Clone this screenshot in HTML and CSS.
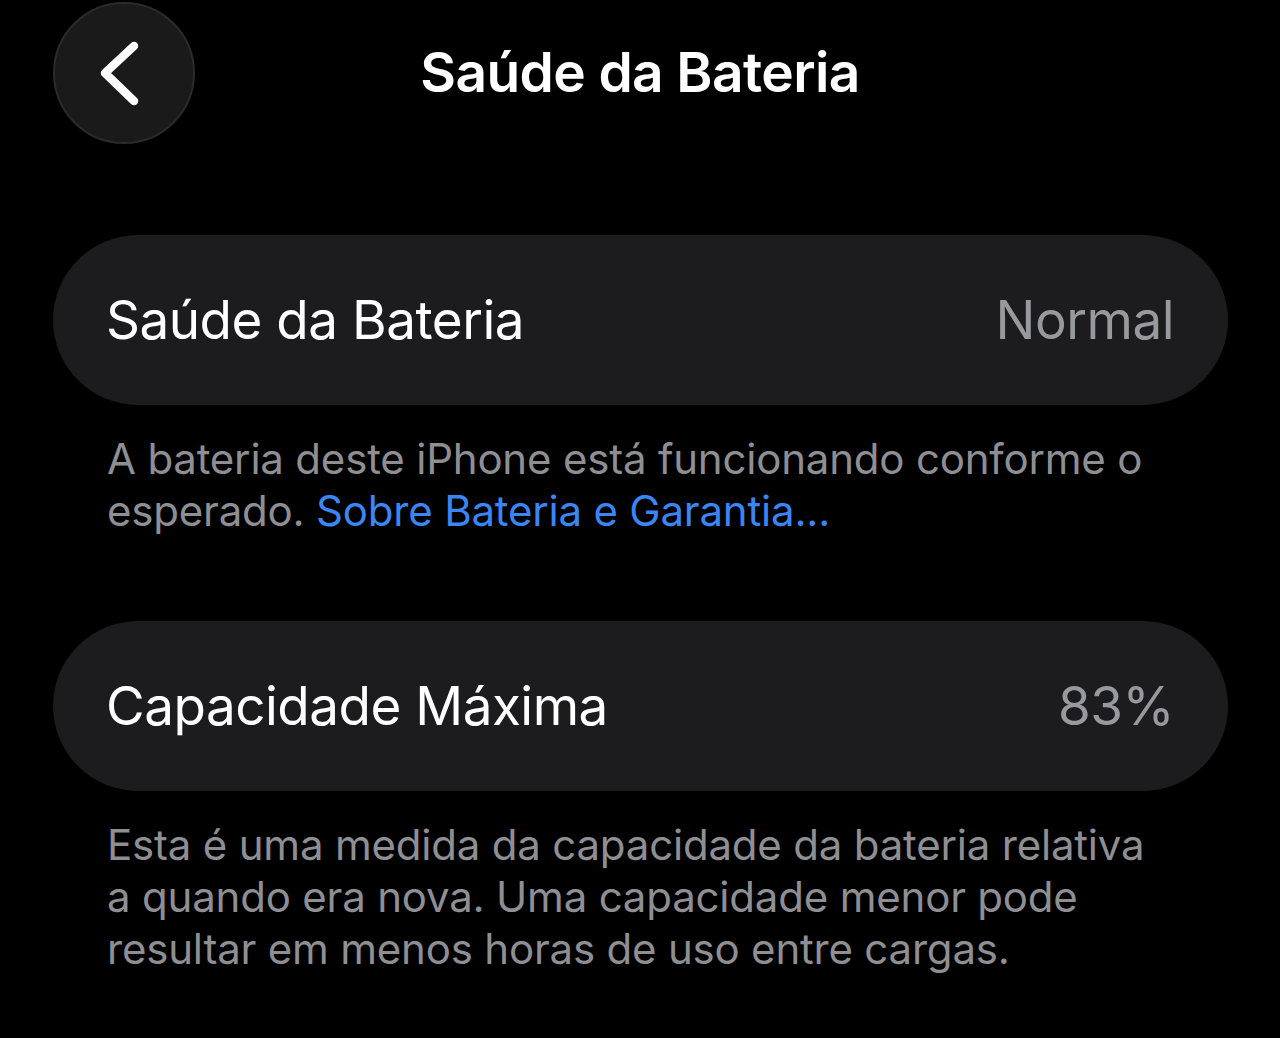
FILE: index.html
```html
<!DOCTYPE html>
<html lang="pt-BR">
<head>
<meta charset="utf-8">
<title>Saúde da Bateria</title>
<link rel="stylesheet" href="styles.css">
</head>
<body>
<div class="screen">
  <header class="nav">
    <div class="nav-left">
      <button class="back" aria-label="Voltar">
        <svg viewBox="0 0 142 142" width="142" height="142">
          <path d="M81 44 L52 71 L81 99" fill="none" stroke="#fff" stroke-width="8.5" stroke-linecap="round" stroke-linejoin="round"/>
        </svg>
      </button>
    </div>
    <h1 class="nav-title">Saúde da Bateria</h1>
    <div class="nav-right"></div>
  </header>

  <section class="group first">
    <div class="cell">
      <span class="cell-label">Saúde da Bateria</span>
      <span class="cell-value">Normal</span>
    </div>
    <p class="footnote">A bateria deste iPhone está funcionando conforme o esperado. <a class="link" href="#">Sobre Bateria e Garantia...</a></p>
  </section>

  <section class="group second">
    <div class="cell">
      <span class="cell-label">Capacidade Máxima</span>
      <span class="cell-value">83%</span>
    </div>
    <p class="footnote">Esta é uma medida da capacidade da bateria relativa a quando era nova. Uma capacidade menor pode resultar em menos horas de uso entre cargas.</p>
  </section>
</div>
</body>
</html>
```

FILE: styles.css
```css
* { box-sizing: border-box; }
html, body {
  margin: 0;
  padding: 0;
  background: #000;
}
body {
  font-family: Inter, "Noto Sans", "Liberation Sans", sans-serif;
  color: #fff;
  -webkit-font-smoothing: antialiased;
}
.screen {
  width: 1280px;
  height: 1038px;
  overflow: hidden;
}
.nav {
  display: grid;
  grid-template-columns: 1fr auto 1fr;
  align-items: center;
  height: 144px;
  padding-top: 1px;
}
.nav-left {
  padding-left: 53px;
  display: flex;
}
.back {
  width: 142px;
  height: 142px;
  border-radius: 50%;
  background: #1a1a1b;
  border: 2px solid #2b2b2d;
  padding: 0;
  display: flex;
  align-items: center;
  justify-content: center;
  cursor: pointer;
}
.back svg { display: block; margin: -2px; }
.nav-title {
  margin: 0;
  font-size: 55px;
  font-weight: 600;
  letter-spacing: -0.6px;
  line-height: 1;
}
.group.first { margin-top: 91px; }
.group.second { margin-top: 84px; }
.cell {
  margin: 0 52px 0 53px;
  height: 170px;
  border-radius: 85px;
  background: #1c1c1e;
  display: flex;
  align-items: center;
  justify-content: space-between;
  padding: 0 54px 0 53px;
  font-size: 53px;
  letter-spacing: -0.5px;
}
.cell-label { color: #fff; }
.cell-value { color: #98989f; }
.footnote {
  margin: 28px 0 0;
  padding: 0 128px 0 107px;
  font-size: 42px;
  line-height: 52px;
  color: #8e8e93;
  letter-spacing: -0.2px;
}
.link {
  color: #3a86f4;
  text-decoration: none;
}
```
